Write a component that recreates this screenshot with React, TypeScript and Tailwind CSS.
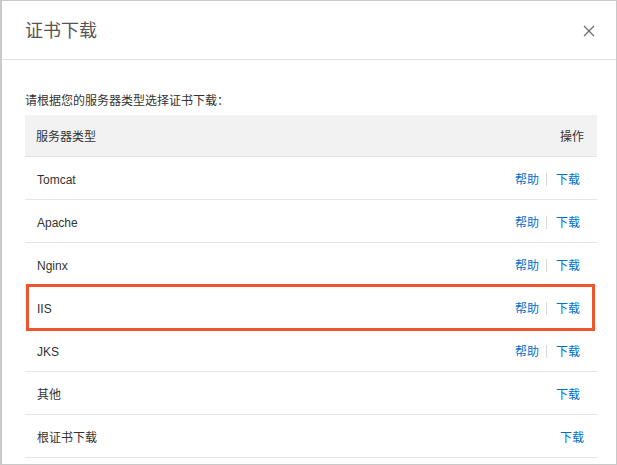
const rows: { name: string; help: boolean; highlight?: boolean; last?: boolean }[] = [
  { name: 'Tomcat', help: true },
  { name: 'Apache', help: true },
  { name: 'Nginx', help: true },
  { name: 'IIS', help: true, highlight: true },
  { name: 'JKS', help: true },
  { name: '其他', help: false },
  { name: '根证书下载', help: false, last: true },
]

export default function App() {
  return (
    <div
      className="w-[617px] h-[465px] bg-white border border-l-2 border-[#c9c9c9] text-[#333] overflow-hidden"
      style={{ fontFamily: '"Liberation Sans", "Noto Sans CJK SC", sans-serif' }}
    >
      {/* 标题栏 */}
      <div className="h-[59px] flex items-center justify-between pl-[23px] pr-[20px] pt-[2px] border-b border-[#e0e0e0]">
        <span className="text-[18px] text-[#555] leading-none">证书下载</span>
        <svg width="12" height="12" viewBox="0 0 12 12" className="mr-[1px]">
          <path d="M1 1 L11 11 M11 1 L1 11" stroke="#666" strokeWidth="1.1" />
        </svg>
      </div>

      <div className="pl-[23px] pr-[19px] pt-[31px]">
        <p className="text-[12px] leading-[20px] mb-[4px]">请根据您的服务器类型选择证书下载：</p>

        <div className="h-[42px] bg-[#f2f2f2] border-b border-[#e3e3e3] flex items-center justify-between pl-[11px] pr-[13px] pt-[2px] text-[12px]">
          <span>服务器类型</span>
          <span>操作</span>
        </div>

        {rows.map((r) => (
          <div
            key={r.name}
            className={`relative h-[43px] border-b border-[#e6e6e6] flex items-center justify-between pl-[12px] pt-[3px] text-[12px] ${
              r.last ? 'pr-[13px]' : 'pr-[17px]'
            }`}
          >
            <span>{r.name}</span>
            <span className="flex items-center text-[#0070cc]">
              {r.help && (
                <>
                  <span>帮助</span>
                  <span className="ml-[7px] mr-[9px] w-px h-[13px] bg-[#d8d8d8]" />
                </>
              )}
              <span>下载</span>
            </span>
            {r.highlight && (
              <div className="absolute -top-[2px] -bottom-[3px] left-[1px] right-[2px] border-[3px] border-[#f0542f]" />
            )}
          </div>
        ))}
      </div>
    </div>
  )
}
